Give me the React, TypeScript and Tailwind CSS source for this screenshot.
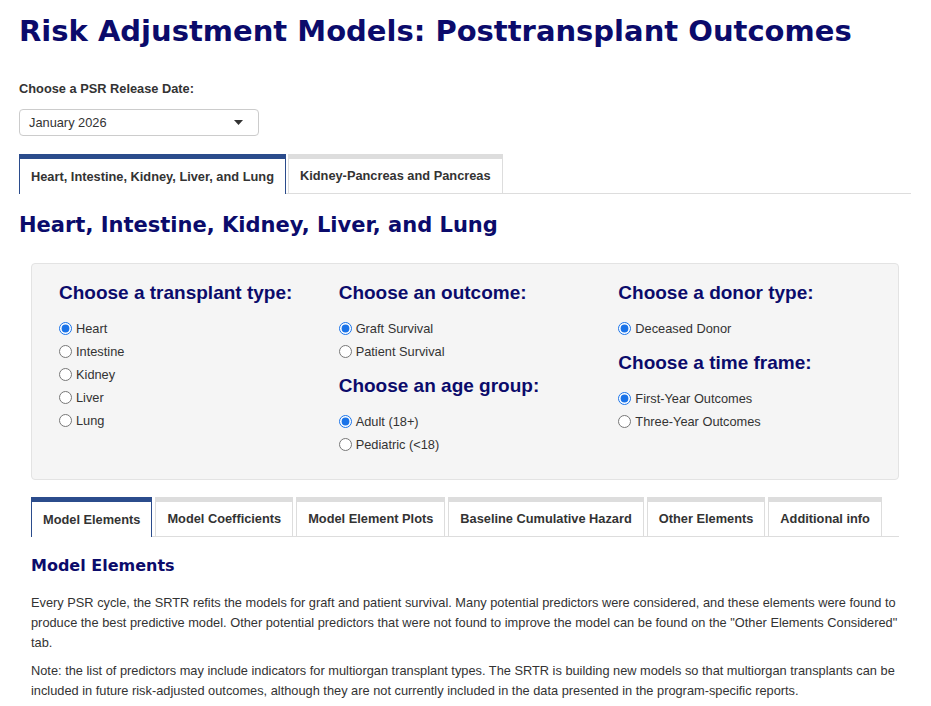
import React from "react";

const navy = "text-[#0b0b6b]";

function Radio({ label, checked }: { label: string; checked?: boolean }) {
  return (
    <label className="flex h-[23px] items-center gap-[4px] text-[12.8px] text-[#333]">
      <input type="radio" defaultChecked={checked} className="m-0 h-[13px] w-[13px] accent-[#1a73e8]" readOnly />
      <span>{label}</span>
    </label>
  );
}

function GroupHeading({ children, first }: { children: React.ReactNode; first?: boolean }) {
  return (
    <h4 className={`${first ? "" : "mt-[12px]"} mb-[13px] text-[19px] font-bold leading-[22px] ${navy}`}>{children}</h4>
  );
}

function Tab({ label, active }: { label: string; active?: boolean }) {
  return (
    <div
      className={`-mb-px flex h-[40px] shrink-0 items-center whitespace-nowrap border-x border-t-[5px] bg-white px-[11px] text-[12.8px] font-bold text-[#333] ${
        active ? "border-[#2b4c8c]" : "border-x-[#ddd] border-t-[#ddd] border-b border-b-[#ddd]"
      }`}
    >
      {label}
    </div>
  );
}

export default function App() {
  return (
    <div className="min-h-screen bg-white pl-[19px] pr-[20px] font-['Liberation_Sans',Arial,sans-serif] text-[#333]">
      <h1 className={`pt-[13px] font-['DejaVu_Sans',sans-serif] text-[29px] font-bold leading-[36px] ${navy}`}>
        Risk Adjustment Models: Posttransplant Outcomes
      </h1>

      <div className="mt-[31px] text-[12.8px] font-bold leading-[18px]">Choose a PSR Release Date:</div>
      <div className="mt-[11px] flex h-[27px] w-[240px] items-center justify-between rounded-[4px] border border-[#ccc] bg-white pl-[9px] pr-[15px] text-[12.8px]">
        <span>January 2026</span>
        <svg width="9" height="5" viewBox="0 0 9 5">
          <path d="M0 0 H9 L4.5 5 Z" fill="#333" />
        </svg>
      </div>

      <div className="mt-[18px] flex gap-[2px] border-b border-[#ddd]">
        <Tab label="Heart, Intestine, Kidney, Liver, and Lung" active />
        <Tab label="Kidney-Pancreas and Pancreas" />
      </div>

      <h2 className={`mt-[16px] font-['DejaVu_Sans',sans-serif] text-[21px] font-bold leading-[30px] ${navy}`}>
        Heart, Intestine, Kidney, Liver, and Lung
      </h2>

      <div className="mx-[12px] mt-[23px] rounded-[4px] border border-[#e3e3e3] bg-[#f5f5f5] pb-[23px] pl-[27px] pt-[18px]">
        <div className="grid grid-cols-3">
          <div>
            <GroupHeading first>Choose a transplant type:</GroupHeading>
            <Radio label="Heart" checked />
            <Radio label="Intestine" />
            <Radio label="Kidney" />
            <Radio label="Liver" />
            <Radio label="Lung" />
          </div>
          <div>
            <GroupHeading first>Choose an outcome:</GroupHeading>
            <Radio label="Graft Survival" checked />
            <Radio label="Patient Survival" />
            <GroupHeading>Choose an age group:</GroupHeading>
            <Radio label="Adult (18+)" checked />
            <Radio label="Pediatric (<18)" />
          </div>
          <div>
            <GroupHeading first>Choose a donor type:</GroupHeading>
            <Radio label="Deceased Donor" checked />
            <GroupHeading>Choose a time frame:</GroupHeading>
            <Radio label="First-Year Outcomes" checked />
            <Radio label="Three-Year Outcomes" />
          </div>
        </div>
      </div>

      <div className="mx-[12px]">
        <div className="mt-[17px] flex gap-[3px] border-b border-[#ddd]">
          <Tab label="Model Elements" active />
          <Tab label="Model Coefficients" />
          <Tab label="Model Element Plots" />
          <Tab label="Baseline Cumulative Hazard" />
          <Tab label="Other Elements" />
          <Tab label="Additional info" />
        </div>

        <h3 className={`mt-[17px] font-['DejaVu_Sans',sans-serif] text-[16px] font-bold leading-[24px] ${navy}`}>
          Model Elements
        </h3>
        <p className="mt-[15px] text-[12.8px] leading-[20px]">
          Every PSR cycle, the SRTR refits the models for graft and patient survival. Many potential predictors were
          considered, and these elements were found to produce the best predictive model. Other potential predictors that
          were not found to improve the model can be found on the "Other Elements Considered" tab.
        </p>
        <p className="mt-[8px] text-[12.8px] leading-[20px]">
          Note: the list of predictors may include indicators for multiorgan transplant types. The SRTR is building new
          models so that multiorgan transplants can be included in future risk-adjusted outcomes, although they are not
          currently included in the data presented in the program-specific reports.
        </p>
      </div>
    </div>
  );
}
